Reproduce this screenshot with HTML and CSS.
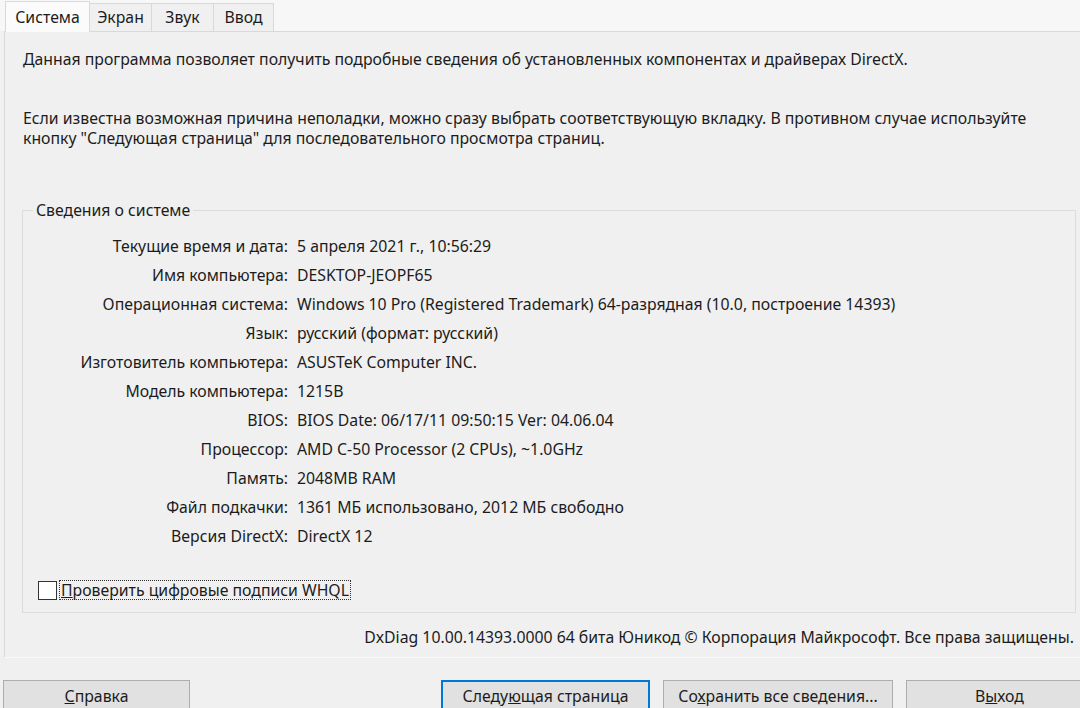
FILE: index.html
```html
<!DOCTYPE html>
<html lang="ru">
<head>
	<meta charset="utf-8">
	<title>Средство диагностики DirectX</title>
	<link rel="stylesheet" href="styles.css">
</head>
<body>
	<div class="tabs">
		<span class="tab on">Система</span>
		<span class="tab">Экран</span>
		<span class="tab">Звук</span>
		<span class="tab last">Ввод</span>
	</div>
	<div class="page">
		<p class="intro">Данная программа позволяет получить подробные сведения об установленных компонентах и драйверах DirectX.</p>
		<p class="hint">Если известна возможная причина неполадки, можно сразу выбрать соответствующую вкладку. В противном случае используйте<br>кнопку "Следующая страница" для последовательного просмотра страниц.</p>

		<fieldset class="group">
			<legend>Сведения о системе</legend>
			<div class="info">
				<span class="key">Текущие время и дата:</span><span class="val">5 апреля 2021 г., 10:56:29</span>
				<span class="key">Имя компьютера:</span><span class="val">DESKTOP-JEOPF65</span>
				<span class="key">Операционная система:</span><span class="val">Windows 10 Pro (Registered Trademark) 64-разрядная (10.0, построение 14393)</span>
				<span class="key">Язык:</span><span class="val">русский (формат: русский)</span>
				<span class="key">Изготовитель компьютера:</span><span class="val">ASUSTeK Computer INC.</span>
				<span class="key">Модель компьютера:</span><span class="val">1215B</span>
				<span class="key">BIOS:</span><span class="val">BIOS Date: 06/17/11 09:50:15 Ver: 04.06.04</span>
				<span class="key">Процессор:</span><span class="val">AMD C-50 Processor (2 CPUs), ~1.0GHz</span>
				<span class="key">Память:</span><span class="val">2048MB RAM</span>
				<span class="key">Файл подкачки:</span><span class="val">1361 МБ использовано, 2012 МБ свободно</span>
				<span class="key">Версия DirectX:</span><span class="val">DirectX 12</span>
			</div>
			<label class="check">
				<span class="box"></span>
				<span class="focus"><u>П</u>роверить цифровые подписи WHQL</span>
			</label>
		</fieldset>

		<p class="copy">DxDiag 10.00.14393.0000 64 бита Юникод © Корпорация Майкрософт. Все права защищены.</p>
	</div>
	<div class="buttons">
		<button class="btn help"><u>С</u>правка</button>
		<span class="spacer"></span>
		<button class="btn next">Следу<u>ю</u>щая страница</button>
		<button class="btn save">Со<u>х</u>ранить все сведения...</button>
		<button class="btn exit">В<u>ы</u>ход</button>
	</div>
</body>
</html>
```

FILE: styles.css
```css
*{margin: 0;padding: 0;box-sizing: border-box;}
html,body{
	width: 1080px;
	height: 708px;
	overflow: hidden;
}
body{
	background: #f0f0f0;
	font-family: "Noto Sans", "Open Sans", sans-serif;
	font-size: 15.8px;
	line-height: 20px;
	color: #1c1c1c;
}
.tabs{
	display: flex;
	align-items: flex-end;
	height: 31px;
	padding-left: 5px;
	background: #f7f7f7;
}
.tab{
	width: 63px;
	height: 28px;
	line-height: 26px;
	text-align: center;
	background: #f0f0f0;
	border: 1px solid #d9d9d9;
	border-bottom: none;
	margin-left: -1px;
}
.tab.last{
	width: 61px;
}
.tab.on{
	width: 85px;
	height: 31px;
	line-height: 30px;
	background: #fbfbfb;
	margin-left: 0;
	margin-bottom: -1px;
	position: relative;
	z-index: 1;
}
.page{
	width: 1092px;
	margin-left: 4px;
	height: 627px;
	border: 1px solid #d9d9d9;
	border-bottom-color: #fafafa;
	padding: 17px 19px 0 17px;
	background: #f0f0f0;
}
.intro{
	margin-left: 1px;
}
.hint{
	margin: 39px 0 0 1px;
}
.group{
	margin-top: 52px;
	border: 1px solid #dcdcdc;
	height: 413px;
	padding: 0;
}
.group legend{
	margin-left: 10px;
	padding: 0 3px;
}
.info{
	display: grid;
	grid-template-columns: 265px 1fr;
	column-gap: 9px;
	grid-auto-rows: 29.1px;
	align-items: center;
	margin-top: 11px;
}
.key{
	text-align: right;
}
.check{
	display: flex;
	align-items: center;
	margin: 29px 0 0 15px;
	height: 20px;
}
.box{
	width: 19px;
	height: 19px;
	border: 1px solid #333;
	background: #fff;
}
.focus{
	margin-left: 2px;
	padding: 0 1px;
	border: 1px dotted #333;
	line-height: 18px;
}
.copy{
	margin-top: 14px;
	text-align: right;
	padding-right: 2px;
}
.buttons{
	display: flex;
	gap: 13px;
	padding: 22px 0 0 3px;
	width: 1110px;
}
.spacer{
	flex: 0 0 238px;
}
.btn{
	height: 34px;
	font: inherit;
	color: #1c1c1c;
	background: #e1e1e1;
	border: 1px solid #adadad;
	padding-bottom: 2px;
}
.help{width: 187px;margin-right: -13px;}
.next{width: 209px;border: 2px solid #0078d7;}
.save{width: 230px;}
.exit{width: 187px;}
```
